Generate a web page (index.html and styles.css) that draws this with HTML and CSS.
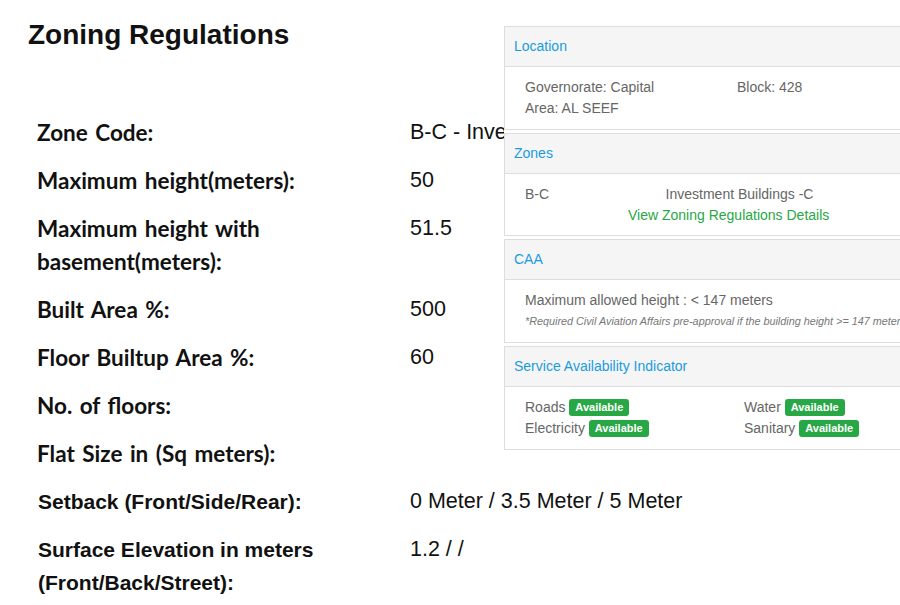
FILE: index.html
```html
<!DOCTYPE html>
<html lang="en">
<head>
<meta charset="utf-8">
<title>Zoning Regulations</title>
<link rel="stylesheet" href="styles.css">
</head>
<body>
<main class="page">
  <h1 class="title">Zoning Regulations</h1>
  <div class="regs">
    <div class="label">Zone Code:</div><div class="value">B-C - Investment Buildings -C</div>
    <div class="label">Maximum height(meters):</div><div class="value">50</div>
    <div class="label">Maximum height with basement(meters):</div><div class="value">51.5</div>
    <div class="label">Built Area %:</div><div class="value">500</div>
    <div class="label">Floor Builtup Area %:</div><div class="value">60</div>
    <div class="label">No. of floors:</div><div class="value"></div>
    <div class="label">Flat Size in (Sq meters):</div><div class="value"></div>
    <div class="label alt">Setback (Front/Side/Rear):</div><div class="value">0 Meter / 3.5 Meter / 5 Meter</div>
    <div class="label alt">Surface Elevation in meters (Front/Back/Street):</div><div class="value">1.2 / /</div>
  </div>
</main>

<aside class="info">
  <section class="panel">
    <div class="panel-head">Location</div>
    <div class="panel-body">
      <div class="cols loc">
        <div>Governorate: Capital</div><div>Block: 428</div>
        <div>Area: AL SEEF</div><div></div>
      </div>
    </div>
  </section>
  <section class="panel">
    <div class="panel-head">Zones</div>
    <div class="panel-body zones">
      <div class="zone-code">B-C</div>
      <div class="zone-desc">
        <div class="zone-name">Investment Buildings -C</div>
        <a class="zone-link" href="#">View Zoning Regulations Details</a>
      </div>
    </div>
  </section>
  <section class="panel">
    <div class="panel-head">CAA</div>
    <div class="panel-body">
      <div>Maximum allowed height : &lt; 147 meters</div>
      <div class="note">*Required Civil Aviation Affairs pre-approval if the building height &gt;= 147 meters</div>
    </div>
  </section>
  <section class="panel">
    <div class="panel-head">Service Availability Indicator</div>
    <div class="panel-body">
      <div class="cols svc">
        <div>Roads <span class="badge">Available</span></div><div>Water <span class="badge">Available</span></div>
        <div>Electricity <span class="badge">Available</span></div><div>Sanitary <span class="badge">Available</span></div>
      </div>
    </div>
  </section>
</aside>
</body>
</html>
```

FILE: styles.css
```css
html, body {
  margin: 0;
  padding: 0;
  background: #fff;
}
body {
  width: 900px;
  height: 605px;
  overflow: hidden;
  position: relative;
  font-family: "Liberation Sans", Arial, sans-serif;
  color: #111;
}
.page {
  padding: 18px 0 0 28px;
}
.title {
  margin: 0;
  font-size: 28px;
  line-height: 34px;
  font-weight: 700;
  color: #111;
}
.regs {
  display: grid;
  grid-template-columns: 373px 1fr;
  row-gap: 15px;
  margin-top: 64px;
  padding-left: 9px;
}
.label {
  font-family: Lato, "Open Sans", sans-serif;
  font-weight: 700;
  font-size: 22.5px;
  word-spacing: 2px;
  line-height: 33px;
  max-width: 340px;
  color: #111;
}
.label.alt {
  font-family: "Liberation Sans", Arial, sans-serif;
  font-size: 21px;
  word-spacing: 0;
  padding-left: 1px;
}
.value {
  font-size: 21.5px;
  line-height: 33px;
  color: #111;
  white-space: nowrap;
}

.info {
  position: absolute;
  left: 504px;
  top: 26px;
  width: 440px;
  display: flex;
  flex-direction: column;
  gap: 3px;
  background: #fff;
  font-size: 14px;
  color: #666;
}
.panel {
  border: 1px solid #ddd;
  background: #fff;
}
.panel-head {
  background: #f5f5f5;
  border-bottom: 1px solid #ddd;
  height: 39px;
  line-height: 39px;
  padding-left: 9px;
  color: #1a9be0;
}
.panel-body {
  padding: 10px 20px 10px 20px;
  height: 42px;
  line-height: 21px;
}
.panel-body.zones {
  height: 41px;
}
.cols {
  display: grid;
}
.loc {
  grid-template-columns: 212px 1fr;
}
.svc {
  grid-template-columns: 219px 1fr;
}
.zones {
  display: flex;
}
.zone-code {
  width: 103px;
}
.zone-desc {
  width: 201px;
  text-align: center;
}
.zone-name {
  padding-left: 22px;
}
.zone-link {
  color: #28a745;
  text-decoration: none;
  white-space: nowrap;
}
.note {
  font-size: 10.8px;
  font-style: italic;
  color: #777;
  white-space: nowrap;
}
.badge {
  display: inline-block;
  background: #28a745;
  color: #fff;
  font-size: 11px;
  font-weight: 700;
  line-height: 17px;
  padding: 0 6px;
  border-radius: 3px;
  vertical-align: 1px;
}
```
